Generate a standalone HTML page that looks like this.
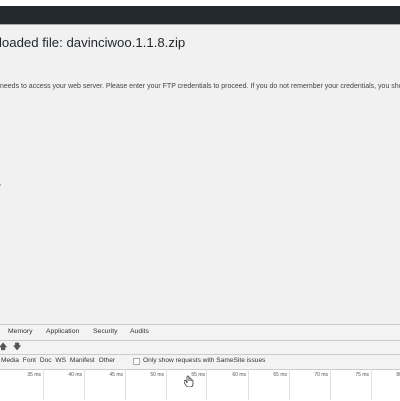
<!DOCTYPE html>
<html><head><style>
body{margin:0;width:400px;height:400px;overflow:hidden;background:#f1f1f1;font-family:"Liberation Sans",sans-serif;position:relative}
.a{position:absolute;white-space:nowrap}
.dt{position:absolute;left:0;width:400px;background:#fff}
.g{position:absolute;top:369px;height:31px;width:1px;background:#e0e0e0}
.l{position:absolute;top:372px;font-size:5px;color:#555;text-align:right;width:30px}
</style></head><body>
<div class="a" style="top:0;left:0;width:400px;height:6px;background:#fff"></div>
<div class="a" style="top:6px;left:0;width:400px;height:18px;background:#23282d"></div>
<div class="a" style="top:24px;left:0;width:400px;height:1px;background:#aaa"></div>
<div class="a" style="top:35px;left:-1px;font-size:13.2px;color:#23282d">loaded file: davinciwoo.1.1.8.zip</div>
<div class="a" style="top:83px;left:0;font-size:7px;color:#444">needs to access your web server. Please enter your FTP credentials to proceed. If you do not remember your credentials, you sho</div>
<div class="a" style="top:184px;left:0;width:1px;height:2px;background:#9bb"></div>
<div class="dt" style="top:324px;height:76px;background:#f3f3f3;border-top:1px solid #ccc"></div>
<div class="a" style="top:328px;left:8px;font-size:6.8px;color:#333">Memory</div>
<div class="a" style="top:328px;left:46px;font-size:6.8px;color:#333">Application</div>
<div class="a" style="top:328px;left:93px;font-size:6.8px;color:#333">Security</div>
<div class="a" style="top:328px;left:130px;font-size:6.8px;color:#333">Audits</div>
<div class="a" style="top:340px;left:0;width:400px;height:1px;background:#ccc"></div>
<div class="a" style="top:341px;left:-1px;font-size:8px;color:#555;font-weight:bold">🡅</div>
<div class="a" style="top:341px;left:13px;font-size:8px;color:#555;font-weight:bold">🡇</div>
<div class="a" style="top:354px;left:0;width:400px;height:1px;background:#ccc"></div>
<div class="a" style="top:357px;left:1px;font-size:6.6px;color:#333;word-spacing:2px">Media Font Doc WS Manifest Other</div>
<div class="a" style="top:358px;left:133px;width:5px;height:5px;border:1px solid #aaa;background:#fff"></div>
<div class="a" style="top:357px;left:143px;font-size:6.6px;color:#333">Only show requests with SameSite issues</div>
<div class="dt" style="top:369px;height:31px;border-top:1px solid #ccc"></div>
<div class="g" style="left:43px"></div><div class="g" style="left:84px"></div><div class="g" style="left:125px"></div><div class="g" style="left:166px"></div><div class="g" style="left:206px"></div><div class="g" style="left:248px"></div><div class="g" style="left:289px"></div><div class="g" style="left:330px"></div><div class="g" style="left:371px"></div>
<div class="l" style="left:11px">35 ms</div><div class="l" style="left:52px">40 ms</div><div class="l" style="left:93px">45 ms</div><div class="l" style="left:134px">50 ms</div><div class="l" style="left:175px">55 ms</div><div class="l" style="left:216px">60 ms</div><div class="l" style="left:257px">65 ms</div><div class="l" style="left:298px">70 ms</div><div class="l" style="left:339px">75 ms</div><div class="l" style="left:380px">80 ms</div>
<svg class="a" style="top:375px;left:184px" width="10" height="12" viewBox="0 0 10 12"><path d="M3 8V2a1 1 0 0 1 2 0v4V4a1 1 0 0 1 2 0v2a1 1 0 0 1 2 0v3c0 2-1 3-3 3H5C3 12 2 11 1 9L0 7a1 1 0 0 1 2-1l1 2z" fill="#fff" stroke="#333" stroke-width="0.8"/></svg>
</body></html>
